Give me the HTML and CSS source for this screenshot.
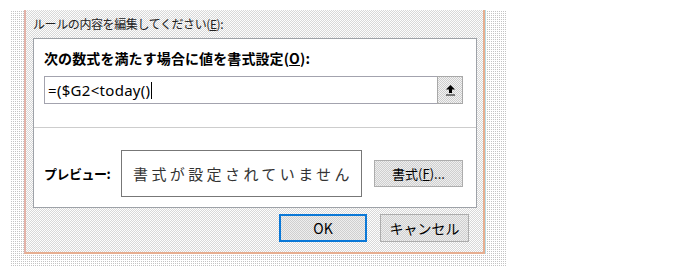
FILE: index.html
```html
<!DOCTYPE html>
<html lang="ja">

<head>
  <meta charset="UTF-8">
  <title>書式ルールの編集</title>
  <link rel="stylesheet" href="styles.css">
</head>

<body>
  <div class="shot">
    <div class="dialog">
      <div class="caption">ルールの内容を編集してください(<u>E</u>):</div>

      <!-- rule panel -->
      <div class="panel">
        <div class="panel-top">
          <div class="title">次の数式を満たす場合に値を書式設定(<u>O</u>):</div>
          <div class="formula">
            <div class="formula-text">=($G2&lt;today()<span class="caret"></span></div>
            <button class="pick-btn" type="button">
              <svg width="11" height="11" viewBox="0 0 11 11">
                <path d="M5.5 0 L10 4.5 L7 4.5 L7 8 L4 8 L4 4.5 L1 4.5 Z" fill="#000" />
                <rect x="1" y="9" width="9" height="2" fill="#777" />
              </svg>
            </button>
          </div>
        </div>

        <div class="panel-bottom">
          <span class="preview-label">プレビュー:</span>
          <div class="preview-box">書式が設定されていません</div>
          <button class="btn format-btn" type="button">書式(<u>F</u>)...</button>
        </div>
      </div>

      <div class="actions">
        <button class="btn ok-btn" type="button">OK</button>
        <button class="btn" type="button">キャンセル</button>
      </div>
    </div>
  </div>
</body>

</html>
```

FILE: styles.css
```css
body {
  margin: 0;
  background: #ffffff;
  font-family: 'Noto Sans CJK JP', 'Noto Sans', sans-serif;
  color: #000;
}

.shot {
  margin: 10px 0 0 10px;
  width: 497px;
  height: 257px;
  box-sizing: border-box;
  padding: 0 22px 0 14px;
  background-color: #c4c4c4;
  background-image:
    linear-gradient(90deg, #fff 1px, transparent 1px),
    linear-gradient(#fff 1px, transparent 1px);
  background-size: 2px 2px;
}

.dialog {
  width: 461px;
  height: 244px;
  box-sizing: border-box;
  border-left: 2px solid #e2b2a8;
  border-right: 2px solid #e6ae90;
  border-bottom: 2px solid #e6ae90;
  box-shadow: 1px 0 0 #b8dce4;
  background: repeating-conic-gradient(#d8d8d8 0 25%, #fdfdfd 0 50%) 0 0 / 2px 2px;
  padding: 0 6px 0 7px;
  display: flex;
  flex-direction: column;
}

.caption {
  font-size: 12px;
  line-height: 16px;
  margin-top: 6px;
  height: 22px;
  letter-spacing: -0.4px;
  color: #222;
}

u {
  text-decoration-thickness: 1px;
}

.panel {
  width: 444px;
  height: 170px;
  box-sizing: border-box;
  border: 1px solid #9ea2a8;
  background: #ffffff;
  display: flex;
  flex-direction: column;
}

.panel-top {
  height: 88px;
  border-bottom: 1px solid #cdcdcd;
  padding: 0 13px 0 10px;
}

.title {
  font-size: 14px;
  font-weight: bold;
  line-height: 20px;
  margin-top: 9px;
  height: 28px;
  letter-spacing: 0.1px;
}

.formula {
  display: flex;
  height: 28px;
  border: 1px solid #a3a3ae;
  box-sizing: border-box;
  width: 419px;
}

.formula-text {
  flex: 1;
  font-family: 'Noto Sans', sans-serif;
  font-size: 15px;
  line-height: 26px;
  padding-left: 3px;
  letter-spacing: 0.3px;
  display: flex;
  align-items: center;
}

.caret {
  display: inline-block;
  width: 1px;
  height: 17px;
  background: #000;
  margin-left: 1px;
}

.pick-btn {
  width: 26px;
  height: 28px;
  margin: -1px -1px -1px 0;
  border: 1px solid #a8a8a8;
  background: repeating-conic-gradient(#cdcdcd 0 25%, #f3f3f3 0 50%) 0 0 / 2px 2px;
  padding: 0;
  display: flex;
  align-items: center;
  justify-content: center;
}

.panel-bottom {
  flex: 1;
  display: flex;
  align-items: center;
  padding: 12px 13px 0 10px;
}

.preview-label {
  font-size: 13px;
  font-weight: bold;
  letter-spacing: -0.5px;
  width: 77px;
}

.preview-box {
  width: 241px;
  height: 47px;
  box-sizing: border-box;
  border: 1px solid #777;
  font-size: 15px;
  letter-spacing: 3.4px;
  color: #333;
  display: flex;
  align-items: center;
  padding-left: 11px;
  white-space: nowrap;
  overflow: hidden;
}

.btn {
  font-family: 'Noto Sans CJK JP', 'Noto Sans', sans-serif;
  font-size: 13px;
  color: #000;
  border: 1px solid #adadad;
  background: repeating-conic-gradient(#cfcfcf 0 25%, #eeeeee 0 50%) 0 0 / 2px 2px;
  padding: 0;
  width: 89px;
  height: 28px;
}

.format-btn {
  margin-left: 12px;
  height: 27px;
}

.actions {
  display: flex;
  justify-content: flex-end;
  gap: 13px;
  margin-top: 6px;
  padding-right: 8px;
}

.actions .btn {
  font-size: 14px;
}

.ok-btn {
  width: 88px;
  border: 2px solid #0a78d7;
}
```
